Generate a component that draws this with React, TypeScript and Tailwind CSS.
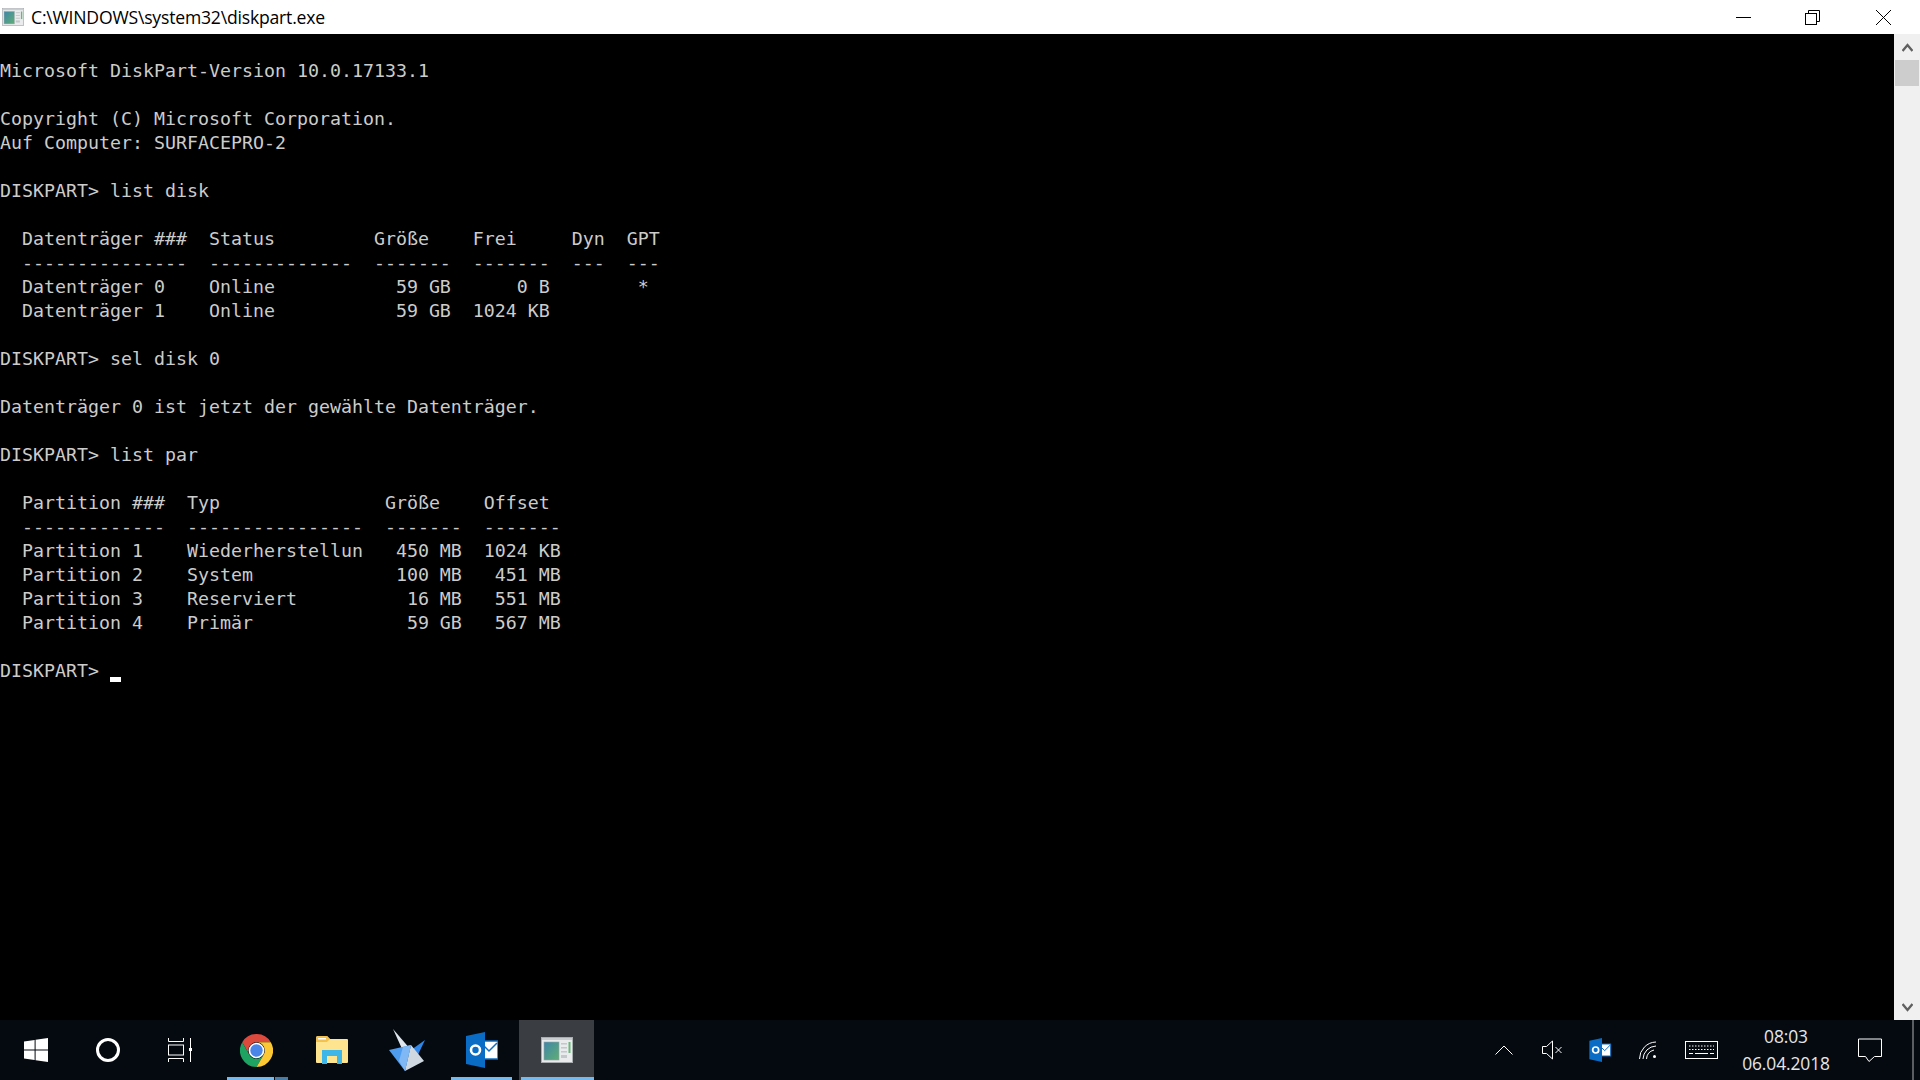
import React from "react";

const CONSOLE_LINES = [
  "",
  "Microsoft DiskPart-Version 10.0.17133.1",
  "",
  "Copyright (C) Microsoft Corporation.",
  "Auf Computer: SURFACEPRO-2",
  "",
  "DISKPART> list disk",
  "",
  "  Datenträger ###  Status         Größe    Frei     Dyn  GPT",
  "  ---------------  -------------  -------  -------  ---  ---",
  "  Datenträger 0    Online           59 GB      0 B        *",
  "  Datenträger 1    Online           59 GB  1024 KB",
  "",
  "DISKPART> sel disk 0",
  "",
  "Datenträger 0 ist jetzt der gewählte Datenträger.",
  "",
  "DISKPART> list par",
  "",
  "  Partition ###  Typ               Größe    Offset",
  "  -------------  ----------------  -------  -------",
  "  Partition 1    Wiederherstellun   450 MB  1024 KB",
  "  Partition 2    System             100 MB   451 MB",
  "  Partition 3    Reserviert          16 MB   551 MB",
  "  Partition 4    Primär              59 GB   567 MB",
  "",
];

function CmdIcon({ className }: { className?: string }) {
  return (
    <svg viewBox="0 0 32 26" className={className}>
      <defs>
        <linearGradient id="cmdGrad" x1="0" y1="0" x2="1" y2="1">
          <stop offset="0" stopColor="#3f86a8" />
          <stop offset="1" stopColor="#5fae74" />
        </linearGradient>
      </defs>
      <rect x="0.5" y="0.5" width="31" height="25" fill="#e9ebec" stroke="#a9adb0" />
      <rect x="1" y="1" width="30" height="2" fill="#c9cdd0" />
      <rect x="3" y="5" width="15" height="18" fill="url(#cmdGrad)" stroke="#9aa1a6" strokeWidth="0.6" />
      <rect x="20" y="6" width="6" height="1.5" fill="#c4c8ca" />
      <rect x="20" y="10" width="6" height="1.5" fill="#c4c8ca" />
      <rect x="20" y="14" width="6" height="1.5" fill="#c4c8ca" />
      <rect x="20" y="18" width="6" height="3" fill="#c4c8ca" />
      <rect x="27.5" y="5" width="2" height="11" fill="#6cb57a" />
    </svg>
  );
}

function WindowsLogo() {
  return (
    <svg viewBox="0 0 24 24" className="w-6 h-6" fill="#fff">
      <path d="M0 3.4 L10.6 1.9 V11.4 H0 Z" />
      <path d="M11.6 1.8 L24 0 V11.4 H11.6 Z" />
      <path d="M0 12.6 H10.6 V22.1 L0 20.6 Z" />
      <path d="M11.6 12.6 H24 V24 L11.6 22.2 Z" />
    </svg>
  );
}

function TaskView() {
  return (
    <svg viewBox="0 0 24 24" className="w-6 h-6" fill="none" stroke="#fff" strokeWidth="1">
      <path d="M0.5 0 V3.5 H15.5 V0" />
      <rect x="0.5" y="7" width="15" height="10" />
      <path d="M0.5 24 V20.5 H15.5 V24" />
      <path d="M22.5 0 V24" />
      <rect x="21" y="10" width="3" height="3" fill="#fff" stroke="none" />
    </svg>
  );
}

function ChromeLogo() {
  return (
    <svg viewBox="0 0 32 32" className="w-[33px] h-[33px]">
      <path d="M2.14 8 A16 16 0 0 1 29.86 8 H16 A8 8 0 0 0 9.07 20 Z" fill="#db4a3d" />
      <path d="M2.14 8 L9.07 20 A8 8 0 0 0 22.93 20 L16 32 A16 16 0 0 1 2.14 8 Z" fill="#1ea362" />
      <path d="M29.86 8 H16 A8 8 0 0 1 22.93 20 L16 32 A16 16 0 0 0 29.86 8 Z" fill="#fcc934" />
      <circle cx="16" cy="16" r="7.6" fill="#fff" />
      <circle cx="16" cy="16" r="6" fill="#4a86e8" />
    </svg>
  );
}

function FolderIcon() {
  return (
    <svg viewBox="0 0 32 32" className="w-8 h-8">
      <path d="M0 4 Q0 2 2 2 H11 L14 5 H31 Q32 5 32 6 V28 Q32 29 31 29 H1 Q0 29 0 28 Z" fill="#ffe48f" />
      <path d="M0 8 V4 Q0 2 2 2 H11 L14 5 L11 8 Z" fill="#f2c14e" />
      <rect x="2" y="4" width="8" height="1.5" fill="#fff" />
      <path d="M6 30 V16 H26 V30 H21 V22 H11 V30 Z" fill="#3fb6e8" />
    </svg>
  );
}

function ArrowApp() {
  return (
    <svg viewBox="0 0 36 42" className="w-[36px] h-[42px]">
      <path d="M4 0 L22 21 L14 22 Z" fill="#dfe6ee" />
      <path d="M36 11 L22 21 L27 30 Z" fill="#2f86e6" />
      <path d="M0 21 L22 16 L16 42 Z" fill="#4d9cf0" />
      <path d="M22 16 L35 32 L16 42 Z" fill="#cfd8e0" />
      <path d="M22 16 L16 42 L10 32 L14 18 Z" fill="#7fb8f4" />
    </svg>
  );
}

function OutlookIcon({ className }: { className?: string }) {
  return (
    <svg viewBox="0 0 32 36" className={className}>
      <rect x="14" y="9" width="18" height="18" fill="#fff" stroke="#0f6cc0" strokeWidth="1.5" />
      <path d="M15 11 L23 19 L31 11" fill="none" stroke="#0f6cc0" strokeWidth="1.5" />
      <path d="M0 4 L19 0 V36 L0 32 Z" fill="#0a6cc4" />
      <circle cx="9.5" cy="18" r="4.5" fill="none" stroke="#fff" strokeWidth="2.6" />
    </svg>
  );
}

function TaskButton({ children, underline, active }: { children: React.ReactNode; underline?: "plain" | "stacked"; active?: boolean }) {
  return (
    <div className={active ? "relative w-[75px] h-full flex items-center justify-center bg-[#3a3d42]" : "relative w-[75px] h-full flex items-center justify-center"}>
      {children}
      {underline === "plain" && <div className="absolute bottom-0 left-[7px] right-[7px] h-[3px] bg-[#76b9ed]" />}
      {underline === "stacked" && (
        <div className="absolute bottom-0 left-[8px] right-[6px] h-[3px] flex">
          <div className="flex-1 bg-[#76b9ed]" />
          <div className="w-[13px] ml-[1px] bg-[#4a7da6]" />
        </div>
      )}
      {active && <div className="absolute bottom-0 left-[2px] right-0 h-[3px] bg-[#76b9ed]" />}
    </div>
  );
}

export default function App() {
  return (
    <div className="w-[1920px] h-[1080px] overflow-hidden flex flex-col bg-black">
      {/* Title bar */}
      <div className="h-[34px] bg-white flex items-center shrink-0">
        <CmdIcon className="w-[22px] h-[18px] ml-[2px]" />
        <span className="ml-[7px] pt-[1px] text-[17.6px] text-black font-['Open_Sans',sans-serif] tracking-[-0.2px]">C:\WINDOWS\system32\diskpart.exe</span>
        <div className="ml-auto mr-[2px] flex items-center h-full">
          <div className="w-[65px] h-full flex items-center justify-center">
            <div className="w-[15px] h-px bg-black" />
          </div>
          <div className="w-[73px] h-full flex items-center justify-center">
            <svg viewBox="0 0 15 15" className="w-[15px] h-[15px]" fill="none" stroke="#000" strokeWidth="1">
              <path d="M3.5 3.5 V0.5 H14.5 V11.5 H11.5" />
              <rect x="0.5" y="3.5" width="11" height="11" />
            </svg>
          </div>
          <div className="w-[69px] h-full flex items-center justify-center">
            <svg viewBox="0 0 15 15" className="w-[15px] h-[15px]" fill="none" stroke="#000" strokeWidth="1">
              <path d="M0 0 L15 15 M15 0 L0 15" />
            </svg>
          </div>
        </div>
      </div>

      {/* Console */}
      <div className="flex-1 flex min-h-0">
        <div className="flex-1 pt-[1px] font-['DejaVu_Sans_Mono',monospace] text-[18.27px] leading-[24px] text-[#cccccc] whitespace-pre">
          {CONSOLE_LINES.map((line, i) => (
            <div key={i} className="h-6">{line}</div>
          ))}
          <div className="relative h-6">
            DISKPART&gt; 
            <div className="absolute left-[110px] top-[18px] w-[11px] h-[5px] bg-white" />
          </div>
        </div>
        <div className="w-[26px] bg-[#f0f0f0] flex flex-col items-center">
          <svg viewBox="0 0 11 9" className="w-[11px] h-[9px] mt-[9px]" fill="none" stroke="#606060" strokeWidth="2.4">
            <path d="M0.5 8 L5.5 2 L10.5 8" />
          </svg>
          <div className="w-6 h-[26px] bg-[#cdcdcd] mt-[8px]" />
          <svg viewBox="0 0 11 9" className="w-[11px] h-[9px] mt-auto mb-[8px]" fill="none" stroke="#606060" strokeWidth="2.4">
            <path d="M0.5 1 L5.5 7 L10.5 1" />
          </svg>
        </div>
      </div>

      {/* Taskbar */}
      <div className="h-[60px] bg-[#050a11] flex items-center shrink-0">
        <div className="w-[72px] h-full flex items-center justify-center"><WindowsLogo /></div>
        <div className="w-[72px] h-full flex items-center justify-center">
          <div className="w-6 h-6 rounded-full border-[3px] border-white" />
        </div>
        <div className="w-[72px] h-full flex items-center justify-center"><TaskView /></div>
        <div className="w-[3px]" />
        <TaskButton underline="stacked"><ChromeLogo /></TaskButton>
        <TaskButton><FolderIcon /></TaskButton>
        <TaskButton><ArrowApp /></TaskButton>
        <TaskButton underline="plain"><OutlookIcon className="w-8 h-9" /></TaskButton>
        <TaskButton active><CmdIcon className="w-8 h-[26px]" /></TaskButton>

        <div className="ml-auto flex items-center h-full">
          <div className="w-12 h-full flex items-center justify-center">
            <svg viewBox="0 0 18 10" className="w-[18px] h-[10px]" fill="none" stroke="#fff" strokeWidth="1">
              <path d="M0.5 9.5 L9 1 L17.5 9.5" />
            </svg>
          </div>
          <div className="w-12 h-full flex items-center justify-center">
            <svg viewBox="0 0 20 20" className="w-5 h-5" fill="none" stroke="#fff" strokeWidth="1">
              <path d="M0.5 6.5 H4.5 L10.5 1 V19 L4.5 13.5 H0.5 Z" />
              <path d="M13.5 7 L19.5 13 M19.5 7 L13.5 13" />
            </svg>
          </div>
          <div className="w-12 h-full flex items-center justify-center">
            <OutlookIcon className="w-6 h-6" />
          </div>
          <div className="w-12 h-full flex items-center justify-center">
            <svg viewBox="0 0 18 18" className="w-[18px] h-[18px]" fill="none" stroke="#fff" strokeWidth="1">
              <path d="M0.5 18 A17 17 0 0 1 17 1" />
              <path d="M4 18 A13.5 13.5 0 0 1 17 5" />
              <path d="M7.5 18 A10 10 0 0 1 15 9" />
              <circle cx="15.5" cy="15.5" r="1.5" fill="#fff" stroke="none" />
            </svg>
          </div>
          <div className="w-[58px] h-full flex items-center justify-center">
            <svg viewBox="0 0 33 18" className="w-[33px] h-[18px]" fill="none" stroke="#fff" strokeWidth="1">
              <rect x="0.5" y="0.5" width="32" height="17" />
              <path d="M4 5 H29 M4 8.5 H29" strokeDasharray="1.5 1.5" />
              <path d="M4 12.5 H8 M10 12.5 H23 M25 12.5 H29" />
            </svg>
          </div>
          <div className="w-[112px] h-full flex flex-col items-center justify-center text-[#e6e6e6] font-['Open_Sans',sans-serif] text-[17.4px] leading-[27px] tracking-[-0.1px]">
            <span>08:03</span>
            <span>06.04.2018</span>
          </div>
          <div className="w-[56px] h-full flex items-center justify-center">
            <svg viewBox="0 0 24 24" className="w-6 h-6" fill="none" stroke="#fff" strokeWidth="1">
              <path d="M0.5 1 H23.5 V18.5 H16.5 L11 23.5 L7.5 18.5 H0.5 Z" />
            </svg>
          </div>
          <div className="w-[14px]" />
          <div className="w-[2px] h-full bg-[#5a5d61]" />
          <div className="w-[6px]" />
        </div>
      </div>
    </div>
  );
}
